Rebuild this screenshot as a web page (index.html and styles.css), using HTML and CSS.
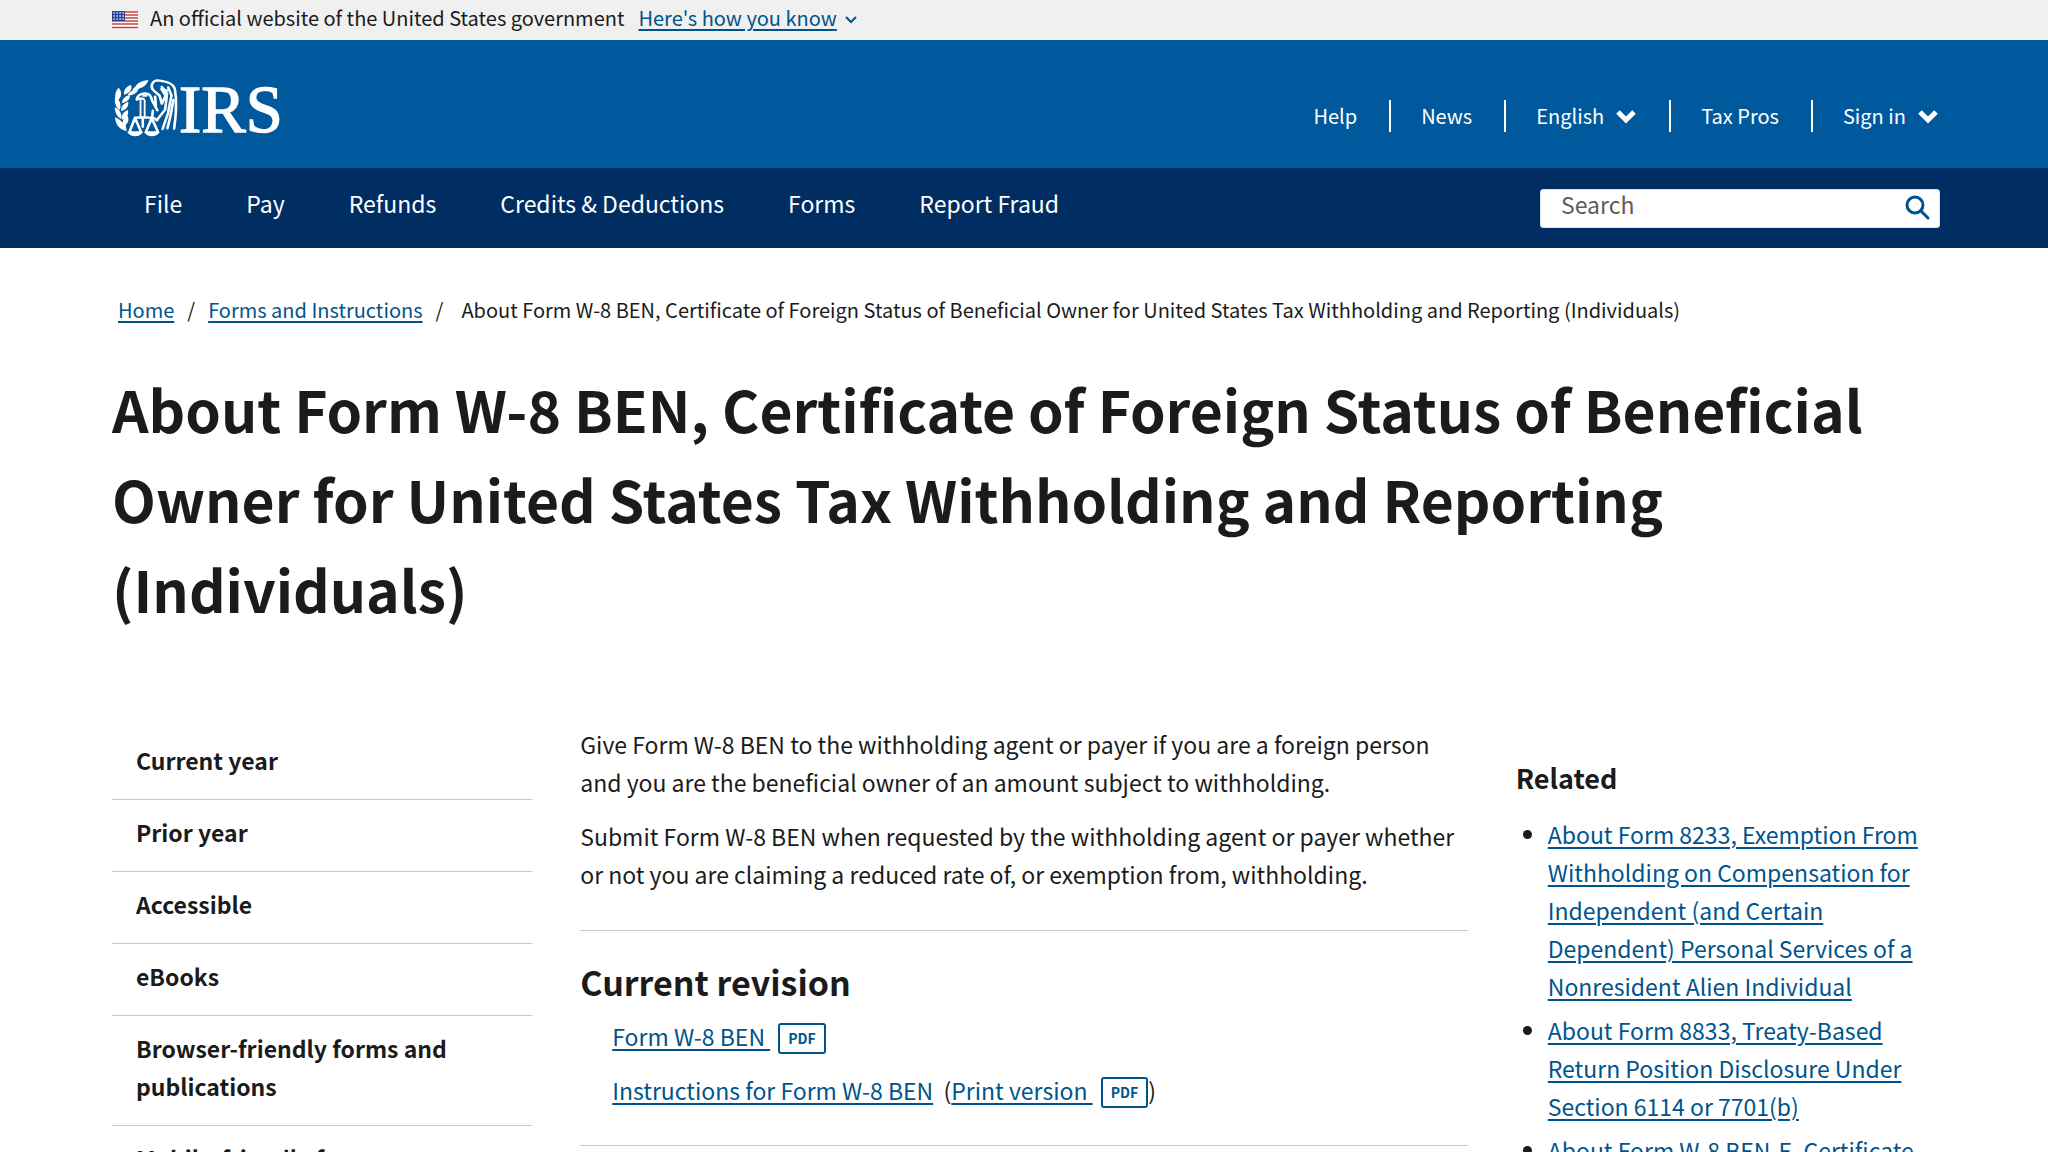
FILE: index.html
```html
<!DOCTYPE html>
<html lang="en">
<head>
    <meta charset="UTF-8">
    <meta name="viewport" content="width=device-width, initial-scale=1.0">
    <title>About Form W-8 BEN | Internal Revenue Service</title>
    <link rel="stylesheet" href="styles.css">
</head>
<body>
    <div class="gov-banner">
        <svg class="flag" viewBox="0 0 26 18" aria-hidden="true">
            <rect width="26" height="18" fill="#fff"/>
            <path d="M0 1h26M0 4h26M0 7h26M0 10h26M0 13h26M0 16.500h26" stroke="#c4453c" stroke-width="1.600"/>
            <rect width="13" height="10" fill="#2b3f9b"/>
            <path d="M1.500 2h11M1.500 5h11M1.500 8h11" stroke="#fff" stroke-width="1.300" stroke-dasharray="1.300 1.700"/>
        </svg>
        <span class="gov-text">An official website of the United States government</span>
        <button class="gov-button" type="button">
            <span>Here's how you know</span>
            <svg width="12" height="8" viewBox="0 0 12 8" aria-hidden="true"><path d="M1 1l5 5 5-5" fill="none" stroke="currentColor" stroke-width="2"/></svg>
        </button>
    </div>

    <header>
        <div class="top-bar">
            <a class="logo" href="#" aria-label="IRS home">
                <svg width="180" height="60" viewBox="0 0 540 180" aria-hidden="true">
                    <g transform="translate(5 5) scale(1.120 1)">
                        <g fill="#fff">
                            <!-- olive branch -->
                            <path d="M50 38c0-10 9-16 22-18-1 10-9 17-22 18z"/>
                            <path d="M56 32c2-15 15-26 37-28-4 16-16 26-37 28z"/>
                            <path d="M28 48c-2-14 4-23 18-30 5 12-2 24-18 30z"/>
                            <path d="M37 50c5-12 14-17 29-17-6 12-15 18-29 17z"/>
                            <path d="M8 68C1 54 4 38 13 27c11 12 9 29-5 41z"/>
                            <path d="M22 73c1-13 9-21 22-24 0 13-8 22-22 24z"/>
                            <path d="M16 94C5 85 1 71 4 55c12 7 18 22 12 39z"/>
                            <path d="M20 97c-1-13 5-22 19-28 2 13-5 24-19 28z"/>
                            <path d="M20 121C9 115 3 102 3 86c12 5 20 19 17 35z"/>
                            <path d="M22 123c-2-13 3-23 16-29 3 13-3 24-16 29z"/>
                            <path d="M35 158C14 152 4 136 4 116c8 3 15 9 20 16 1-10 5-17 13-22 5 11 3 21-5 30z"/>
                        </g>
                        <g fill="none" stroke="#fff" stroke-width="7" stroke-linejoin="round" stroke-linecap="round">
                            <!-- head, body and wing -->
                            <path d="M62 61c2-13 18-20 30-15 10 4 8 13 12 22l13 27"/>
                            <path d="M62 63c7-5 13-4 18-2M80 51h7"/>
                            <path d="M72 66v48M83 65v49M66 116h24" stroke-width="5"/>
                            <path d="M104 31c-6-11 2-26 13-26 22 2 43 7 47 27 6 36 4 70-2 118"/>
                            <path d="M104 31c4 7 14 15 19 20l6 24 10-24-11-20 15 5"/>
                            <path d="M129 25l14 20-5 48-23 32M146 26l9 24-10 56-14 45M111 54l2 28"/>
                            <path d="M160 64l-8 49-8 36M105 96l-2 20 14 8"/>
                            <!-- scales -->
                            <path d="M78 118v26M57 117h48M57 118l-15 43h32zM102 118l-16 43h33z"/>
                        </g>
                        <path d="M36 160h42c-7 17-33 17-42 0zM82 160h41c-7 17-34 17-41 0z" fill="#fff"/>
                    </g>
                    <text class="logo-text" x="201" y="165">IRS</text>
                </svg>
            </a>
            <nav class="utility-nav" aria-label="Utility">
                <a href="#">Help</a>
                <a href="#">News</a>
                <button type="button">English
                    <svg width="22" height="18" viewBox="0 0 22 18" aria-hidden="true"><path d="M3 5l8 8 8-8" fill="none" stroke="currentColor" stroke-width="5"/></svg>
                </button>
                <a href="#">Tax Pros</a>
                <button type="button">Sign in
                    <svg width="22" height="18" viewBox="0 0 22 18" aria-hidden="true"><path d="M3 5l8 8 8-8" fill="none" stroke="currentColor" stroke-width="5"/></svg>
                </button>
            </nav>
        </div>
        <div class="main-bar">
            <nav class="main-nav" aria-label="Main">
                <a href="#">File</a>
                <a href="#">Pay</a>
                <a href="#">Refunds</a>
                <a href="#">Credits &amp; Deductions</a>
                <a href="#">Forms</a>
                <a href="#">Report Fraud</a>
            </nav>
            <form class="search">
                <input type="search" aria-label="Search" placeholder="Search">
                <button type="submit" aria-label="Submit search">
                    <svg width="26" height="26" viewBox="0 0 26 26" aria-hidden="true"><circle cx="10" cy="10" r="8" fill="none" stroke="currentColor" stroke-width="3"/><path d="M16 16l7 7" stroke="currentColor" stroke-width="3" stroke-linecap="round"/></svg>
                </button>
            </form>
        </div>
    </header>

    <main class="page">
        <nav aria-label="Breadcrumb">
            <ol class="breadcrumb">
                <li><a href="#">Home</a></li>
                <li><a href="#">Forms and Instructions</a></li>
                <li>About Form W-8 BEN, Certificate of Foreign Status of Beneficial Owner for United States Tax Withholding and Reporting (Individuals)</li>
            </ol>
        </nav>

        <h1>About Form W-8 BEN, Certificate of Foreign Status of Beneficial Owner for United States Tax Withholding and Reporting (Individuals)</h1>

        <div class="columns">
            <nav class="side-nav" aria-label="Forms and publications">
                <a href="#">Current year</a>
                <a href="#">Prior year</a>
                <a href="#">Accessible</a>
                <a href="#">eBooks</a>
                <a href="#">Browser-friendly forms and publications</a>
                <a href="#">Mobile-friendly forms</a>
            </nav>

            <article class="content">
                <p>Give Form W-8 BEN to the withholding agent or payer if you are a foreign person and you are the beneficial owner of an amount subject to withholding.</p>
                <p>Submit Form W-8 BEN when requested by the withholding agent or payer whether or not you are claiming a reduced rate of, or exemption from, withholding.</p>
                <section class="revision">
                    <h2>Current revision</h2>
                    <p><a href="#">Form W-8 BEN&nbsp;<span class="pdf">PDF</span></a></p>
                    <p><a href="#">Instructions for Form W-8 BEN</a>&nbsp; (<a href="#">Print version&nbsp;<span class="pdf">PDF</span></a>)</p>
                </section>
            </article>

            <aside class="related">
                <h3>Related</h3>
                <ul>
                    <li><a href="#">About Form 8233, Exemption From Withholding on Compensation for Independent (and Certain Dependent) Personal Services of a Nonresident Alien Individual</a></li>
                    <li><a href="#">About Form 8833, Treaty-Based Return Position Disclosure Under Section 6114 or 7701(b)</a></li>
                    <li><a href="#">About Form W-8 BEN-E, Certificate</a></li>
                </ul>
            </aside>
        </div>
    </main>
</body>
</html>
```
FILE: styles.css
```css
* {
    box-sizing: border-box;
}
body {
    margin: 0;
    font-family: "Noto Sans CJK SC", "Noto Sans", sans-serif;
    font-size: 23px;
    line-height: 38px;
    color: #1b1b1b;
    background-color: #fff;
}
a {
    color: #00548c;
    text-decoration-thickness: 2px;
    text-underline-offset: 3px;
}
button,
input {
    font: inherit;
    color: inherit;
    background: none;
    border: 0;
    padding: 0;
}
button {
    cursor: pointer;
}

/* Government banner */
.gov-banner {
    display: flex;
    align-items: center;
    height: 40px;
    padding: 0 108px 4px 112px;
    font-size: 20px;
    background-color: #f0f0f0;
}
.flag {
    width: 26px;
    height: 18px;
    margin-top: 4px;
}
.gov-text {
    margin: 0 14px 0 12px;
}
.gov-button {
    display: flex;
    align-items: center;
    gap: 8px;
    color: #00548c;
}
.gov-button span {
    text-decoration: underline 2px;
    text-underline-offset: 3px;
}
.gov-button svg {
    margin-top: 4px;
}

/* Header */
.top-bar {
    display: flex;
    justify-content: space-between;
    align-items: center;
    height: 128px;
    padding: 6px 108px 0 112px;
    background-color: #00599c;
}
.logo svg {
    display: block;
    overflow: visible;
}
.logo-text {
    font-family: "Liberation Serif", serif;
    font-size: 200px;
    fill: #fff;
    stroke: #fff;
    stroke-width: 4px;
}
.utility-nav {
    display: flex;
    align-items: center;
    padding-top: 18px;
    font-size: 20px;
    line-height: 32px;
    color: #fff;
}
.utility-nav a,
.utility-nav button {
    display: flex;
    align-items: center;
    gap: 11px;
    height: 32px;
    padding: 0 32px 0 30px;
    color: #fff;
    text-decoration: none;
    border-left: 2px solid #fff;
}
.utility-nav a:first-child {
    border-left: 0;
}
.utility-nav button:last-child {
    padding-right: 1px;
}
.main-bar {
    display: flex;
    justify-content: space-between;
    align-items: center;
    height: 80px;
    padding: 0 108px 0 144px;
    background-color: #002d62;
}
.main-nav {
    display: flex;
    gap: 64px;
    padding-bottom: 10px;
}
.main-nav a {
    color: #fff;
    text-decoration: none;
}
.search {
    display: flex;
    align-items: center;
    width: 400px;
    height: 39px;
    padding: 0 8px 0 20px;
    background-color: #fff;
    border: 1px solid #dfe1e2;
    border-radius: 3px;
}
.search input {
    flex: 1;
    min-width: 0;
    height: 36px;
    padding-bottom: 8px;
    outline: 0;
}
.search input::placeholder {
    color: #5c5c5c;
}
.search button {
    color: #00548c;
}
.search svg {
    display: block;
}

/* Page */
.page {
    padding: 43px 108px 0 112px;
}
.breadcrumb {
    display: flex;
    margin: 0;
    padding: 0 6px;
    list-style: none;
    font-size: 20px;
}
.breadcrumb li + li::before {
    content: "/";
    padding: 0 13px;
}
.breadcrumb li:last-child::before {
    padding-right: 18px;
}
h1 {
    margin: 34px 0 92px;
    font-size: 57px;
    line-height: 90px;
}
.columns {
    display: grid;
    grid-template-columns: 420fr 887fr 424fr;
    gap: 48px;
}
.side-nav {
    padding-top: 3px;
}
.side-nav a {
    display: block;
    padding: 13px 24px 20px;
    color: inherit;
    font-weight: bold;
    text-decoration: none;
    border-bottom: 1px solid #c9c9c9;
}
.content p {
    margin: 0 0 16px;
}
.revision {
    margin-top: 37px;
    padding: 24px 0 20px;
    border-top: 1px solid #c9c9c9;
    border-bottom: 1px solid #c9c9c9;
}
.revision h2 {
    margin: 0 0 8px;
    font-size: 34px;
    line-height: 54px;
}
.revision p {
    padding-left: 32px;
}
.pdf {
    display: inline-block;
    margin-left: 8px;
    padding: 0 8px;
    font-size: 14px;
    font-weight: bold;
    line-height: 27px;
    vertical-align: 2px;
    border: 2px solid #00548c;
    border-radius: 3px;
}
.related {
    padding-top: 34px;
}
.related h3 {
    margin: 0 0 18px;
    font-size: 27px;
}
.related ul {
    margin: 0;
    padding-left: 32px;
}
.related li {
    margin-bottom: 6px;
}
```
